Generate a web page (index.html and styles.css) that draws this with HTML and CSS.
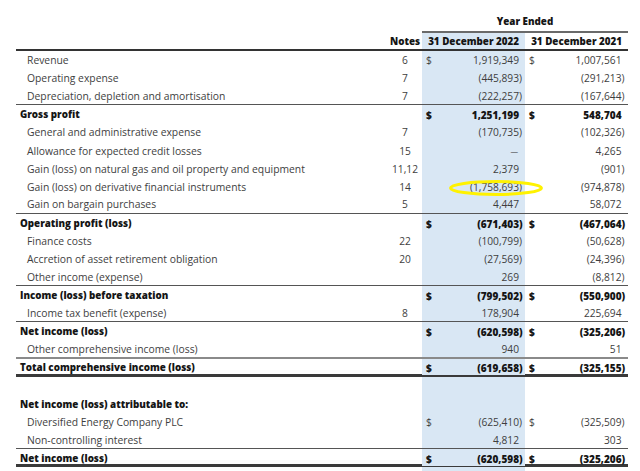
FILE: index.html
```html
<!DOCTYPE html>
<html>
<head>
<meta charset="utf-8">
<link rel="stylesheet" href="styles.css">
</head>
<body>
<div class="sheet">
  <div class="row yr">
    <div></div><div></div>
    <div class="yrcell">Year Ended</div>
  </div>
  <div class="row hdr">
    <div></div>
    <div class="notes">Notes</div>
    <div class="hc c1">31 December 2022</div>
    <div class="hc">31 December 2021</div>
  </div>

  <div class="row"><div class="lab">Revenue</div><div class="nt">6</div><div class="amt c1"><span>$</span><span>1,919,349<i class="cp"></i></span></div><div class="amt"><span>$</span><span>1,007,561<i class="cp"></i></span></div></div>
  <div class="row"><div class="lab">Operating expense</div><div class="nt">7</div><div class="amt c1"><span></span><span>(445,893<i class="cp">)</i></span></div><div class="amt"><span></span><span>(291,213<i class="cp">)</i></span></div></div>
  <div class="row line"><div class="lab">Depreciation, depletion and amortisation</div><div class="nt">7</div><div class="amt c1"><span></span><span>(222,257<i class="cp">)</i></span></div><div class="amt"><span></span><span>(167,644<i class="cp">)</i></span></div></div>
  <div class="row b"><div class="lab">Gross profit</div><div class="nt"></div><div class="amt c1"><span>$</span><span>1,251,199<i class="cp"></i></span></div><div class="amt"><span>$</span><span>548,704<i class="cp"></i></span></div></div>
  <div class="row"><div class="lab">General and administrative expense</div><div class="nt">7</div><div class="amt c1"><span></span><span>(170,735<i class="cp">)</i></span></div><div class="amt"><span></span><span>(102,326<i class="cp">)</i></span></div></div>
  <div class="row"><div class="lab">Allowance for expected credit losses</div><div class="nt">15</div><div class="amt c1"><span></span><span><b class="dash">—</b><i class="cp"></i></span></div><div class="amt"><span></span><span>4,265<i class="cp"></i></span></div></div>
  <div class="row"><div class="lab">Gain (loss) on natural gas and oil property and equipment</div><div class="nt">11,12</div><div class="amt c1"><span></span><span>2,379<i class="cp"></i></span></div><div class="amt"><span></span><span>(901<i class="cp">)</i></span></div></div>
  <div class="row"><div class="lab">Gain (loss) on derivative financial instruments</div><div class="nt">14</div><div class="amt c1 mark"><span></span><span>(1,758,693<i class="cp">)</i></span><svg class="ring" width="100" height="22" viewBox="0 0 100 22"><ellipse cx="50" cy="11" rx="45.5" ry="6.5" fill="none" stroke="#fff200" stroke-width="3"/></svg></div><div class="amt"><span></span><span>(974,878<i class="cp">)</i></span></div></div>
  <div class="row line"><div class="lab">Gain on bargain purchases</div><div class="nt">5</div><div class="amt c1"><span></span><span>4,447<i class="cp"></i></span></div><div class="amt"><span></span><span>58,072<i class="cp"></i></span></div></div>
  <div class="row b"><div class="lab">Operating profit (loss)</div><div class="nt"></div><div class="amt c1"><span>$</span><span>(671,403<i class="cp">)</i></span></div><div class="amt"><span>$</span><span>(467,064<i class="cp">)</i></span></div></div>
  <div class="row"><div class="lab">Finance costs</div><div class="nt">22</div><div class="amt c1"><span></span><span>(100,799<i class="cp">)</i></span></div><div class="amt"><span></span><span>(50,628<i class="cp">)</i></span></div></div>
  <div class="row"><div class="lab">Accretion of asset retirement obligation</div><div class="nt">20</div><div class="amt c1"><span></span><span>(27,569<i class="cp">)</i></span></div><div class="amt"><span></span><span>(24,396<i class="cp">)</i></span></div></div>
  <div class="row line"><div class="lab">Other income (expense)</div><div class="nt"></div><div class="amt c1"><span></span><span>269<i class="cp"></i></span></div><div class="amt"><span></span><span>(8,812<i class="cp">)</i></span></div></div>
  <div class="row b"><div class="lab">Income (loss) before taxation</div><div class="nt"></div><div class="amt c1"><span>$</span><span>(799,502<i class="cp">)</i></span></div><div class="amt"><span>$</span><span>(550,900<i class="cp">)</i></span></div></div>
  <div class="row line"><div class="lab">Income tax benefit (expense)</div><div class="nt">8</div><div class="amt c1"><span></span><span>178,904<i class="cp"></i></span></div><div class="amt"><span></span><span>225,694<i class="cp"></i></span></div></div>
  <div class="row b"><div class="lab">Net income (loss)</div><div class="nt"></div><div class="amt c1"><span>$</span><span>(620,598<i class="cp">)</i></span></div><div class="amt"><span>$</span><span>(325,206<i class="cp">)</i></span></div></div>
  <div class="row grey"><div class="lab">Other comprehensive income (loss)</div><div class="nt"></div><div class="amt c1"><span></span><span>940<i class="cp"></i></span></div><div class="amt"><span></span><span>51<i class="cp"></i></span></div></div>
  <div class="row b heavy"><div class="lab">Total comprehensive income (loss)</div><div class="nt"></div><div class="amt c1"><span>$</span><span>(619,658<i class="cp">)</i></span></div><div class="amt"><span>$</span><span>(325,155<i class="cp">)</i></span></div></div>
  <div class="row"><div class="lab"></div><div class="nt"></div><div class="amt c1"></div><div class="amt"></div></div>
  <div class="row b"><div class="lab">Net income (loss) attributable to:</div><div class="nt"></div><div class="amt c1"></div><div class="amt"></div></div>
  <div class="row"><div class="lab">Diversified Energy Company PLC</div><div class="nt"></div><div class="amt c1"><span>$</span><span>(625,410<i class="cp">)</i></span></div><div class="amt"><span>$</span><span>(325,509<i class="cp">)</i></span></div></div>
  <div class="row line"><div class="lab">Non-controlling interest</div><div class="nt"></div><div class="amt c1"><span></span><span>4,812<i class="cp"></i></span></div><div class="amt"><span></span><span>303<i class="cp"></i></span></div></div>
  <div class="row b heavy"><div class="lab">Net income (loss)</div><div class="nt"></div><div class="amt c1"><span>$</span><span>(620,598<i class="cp">)</i></span></div><div class="amt"><span>$</span><span>(325,206<i class="cp">)</i></span></div></div>
  <div class="row tail"><div></div><div></div><div class="c1"></div><div></div></div>
</div>
</body>
</html>
```

FILE: styles.css
```css
html, body {
  margin: 0;
  padding: 0;
  background: #ffffff;
}
body {
  width: 640px;
  height: 471px;
  overflow: hidden;
  font-family: "Open Sans", "Liberation Sans", sans-serif;
  color: #3e3e3e;
}
.sheet {
  padding-left: 16px;
  width: 612px;
}
.row {
  display: grid;
  grid-template-columns: 372px 34px 103px 103px;
  align-items: center;
  height: 18.1px;
  box-sizing: border-box;
  font-size: 10.2px;
  line-height: 14px;
  white-space: nowrap;
}
.row > div {
  height: 100%;
  display: flex;
  align-items: center;
  box-sizing: border-box;
}
.row > .lab {
  font-size: 10.35px;
  padding-left: 11px;
}
.c1 {
  background: #d9e7f4;
}
.yr {
  height: 33px;
  grid-template-columns: 372px 34px 206px;
}
.row > .yrcell {
  border-bottom: 2px solid #6a6a6a;
  align-items: flex-end;
  justify-content: center;
  font-weight: 800;
  font-size: 9.8px;
  color: #151515;
  padding-bottom: 2px;
}
.hdr {
  height: 18px;
  border-bottom: 2px solid #333333;
  font-weight: 800;
  font-size: 9.8px;
  color: #151515;
}
.row > .notes {
  justify-content: center;
  padding-top: 2px;
}
.row > .hc {
  justify-content: flex-end;
  padding-right: 6px;
  padding-top: 2px;
}
.b {
  font-weight: 800;
  color: #151515;
}
.row.b > div {
  padding-top: 1.5px;
}
.row.b.heavy > div {
  padding-top: 2.5px;
}
.row.b > .lab {
  padding-left: 4px;
  font-size: 9.8px;
}
.row.b > .amt {
  font-size: 10px;
}
.row > .nt {
  justify-content: center;
}
.row > .amt {
  justify-content: space-between;
  padding-left: 4px;
  padding-right: 1px;
}
.row > .amt + .amt {
  padding-right: 1.5px;
}
.cp {
  font-style: normal;
  display: inline-block;
  width: 5px;
}
.dash {
  font-weight: 400;
  font-size: 7.6px;
  padding-right: 1px;
}
.line {
  border-bottom: 1px solid #555555;
}
.grey {
  border-bottom: 2px solid #8a8a8a;
}
.heavy {
  border-bottom: 3px solid #3a3a3a;
}
.tail {
  height: 6px;
}
.mark {
  position: relative;
}
.ring {
  position: absolute;
  left: 24px;
  top: -1px;
  overflow: visible;
}
```
